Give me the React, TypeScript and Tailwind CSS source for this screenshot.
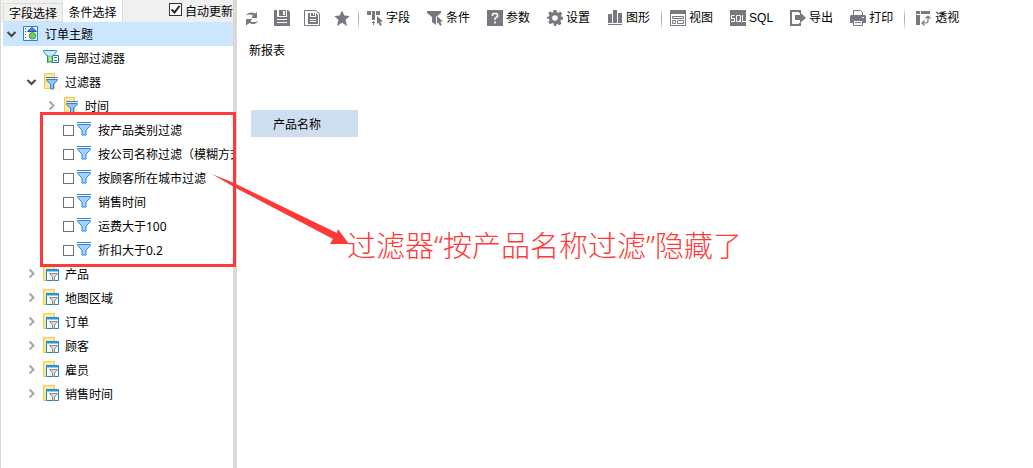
import React from "react";

type IconProps = { children: React.ReactNode };

function ToolIcon({ children }: IconProps) {
  return (
    <svg width="16" height="16" viewBox="0 0 16 16" fill="#767a80" className="shrink-0" aria-hidden="true">
      {children}
    </svg>
  );
}

function TreeIcon({ children }: IconProps) {
  return (
    <svg width="16" height="18" viewBox="0 0 16 18" fill="none" className="shrink-0" aria-hidden="true">
      {children}
    </svg>
  );
}

function Chevron({ open }: { open: boolean }) {
  return (
    <svg width="16" height="16" viewBox="0 0 16 16" fill="none" strokeWidth="2" className="shrink-0" aria-hidden="true">
      {open ? <path d="M2.5 6l4 4 4-4" stroke="#444" /> : <path d="M4.5 3.500l4 4-4 4" stroke="#a6a6a6" />}
    </svg>
  );
}

const topicIcon = (
  <TreeIcon>
    <path d="M.5 1.500h14v14H.5z" fill="#eef5fc" stroke="#1a86d9" />
    <path d="M2 3h1v1H2zM2 6h1v1H2zM2 9h1v1H2zM2 12h1v1H2z" fill="#e8402c" />
    <path d="M9 2.500L13.500 6.500h-9z" fill="#4d7fd6" stroke="#2456b4" />
    <circle cx="9.500" cy="10.800" r="3.200" fill="#7ccb5a" stroke="#3f9b35" />
  </TreeIcon>
);

const localFilterIcon = (
  <TreeIcon>
    <path d="M9.500 6.500h6v7h-6z" fill="#fff" stroke="#2b6bb5" />
    <path d="M11 8.500h3M11 11.500h3" stroke="#2b6bb5" />
    <path d="M.5 1.500h13v1L9.500 7.500h-5L.5 2.500z" fill="#cfeaff" stroke="#2488d8" />
    <path d="M4.500 6.500v7l2.500-1 2.500 1v-7" fill="#7fd08a" stroke="#1f9a3c" />
    <path d="M7 8v4" stroke="#fff" />
  </TreeIcon>
);

const folderFilterIcon = (
  <TreeIcon>
    <path d="M1.500 .5h10v15h-10z" fill="#ffe69a" stroke="#f0c84a" />
    <path d="M3 4.500h12" stroke="#2f86d8" />
    <path d="M3.500 6.500h11v1l-4 3.500v5h-3v-5l-4-3.500z" fill="#8fc4fa" stroke="#2f86d8" />
  </TreeIcon>
);

const funnelIcon = (
  <TreeIcon>
    <path d="M0 1.500h14" stroke="#2f86d8" />
    <path d="M.5 3.500h13v1L9 9v5H5V9L.5 4.500z" fill="#a5d0ff" stroke="#2f86d8" />
  </TreeIcon>
);

const folderTableIcon = (
  <TreeIcon>
    <path d="M.5.500h11v15H.5z" fill="#ffe69a" stroke="#f0c84a" />
    <path d="M3.500 4.500h12v11h-12z" fill="#fff" stroke="#1683d0" />
    <path d="M3 5.500h13" stroke="#1a9ae6" strokeWidth="2" />
    <path d="M6.500 8.500h8l-3 3.500v3.500h-2V12z" fill="#ddd" stroke="#8a8a8a" />
  </TreeIcon>
);

const cursor = <path d="M10 6l6 5.500-2.800.3 1.600 3.200-1.800 1-1.600-3.400L10 14z" />;

const icons = {
  refresh: (
    <ToolIcon>
      <path d="M2 5.500C3.500 2.500 8 1.500 11 3.500L13 2v6H7l2.200-2.200C7.500 4.300 4.500 4.200 2 5.500zM14 11c-1.500 3-5.500 4-8.500 2L2 15.500V9h6.500L6.300 11.200c2 1.300 5 1.200 7.700-.2z" />
    </ToolIcon>
  ),
  save: (
    <ToolIcon>
      <path d="M0 0h3v7h10V0h1l2 2v14H0zM5 0h7v6H5z" />
      <path d="M9 1h2v4H9zM3 9h10v1H3zM3 12h10v1H3z" fill="#fff" />
    </ToolIcon>
  ),
  saveAs: (
    <ToolIcon>
      <path d="M.5.500h11l4 3v12H.5z" fill="none" stroke="#767a80" />
      <path d="M4 3h2v4h6V3l2 2v9H4zM7 3h4v3H7z" />
      <path d="M9 3h1v2H9zM6 9h6v1H6zM6 11h6v1H6z" fill="#fff" />
    </ToolIcon>
  ),
  star: (
    <ToolIcon>
      <path d="M8 .5l2.300 5.100 5.500.5-4.200 3.700L12.900 16 8 12.800 3.100 16l1.300-6.200L.2 6.100l5.500-.5z" />
    </ToolIcon>
  ),
  field: (
    <ToolIcon>
      <path d="M0 1h4v4H0zM5 1h3v9H5zM9 1h4v4H9zM6 11h1v4H6zM5 12h3v1H5z" />
      {cursor}
    </ToolIcon>
  ),
  condition: (
    <ToolIcon>
      <path d="M0 1h14v2L9 7v8l-4-3V7L0 3z" />
      <path d="M10 6l6 5.500-2.800.3 1.600 3.200-1.800 1-1.600-3.400L10 14z" stroke="#fff" strokeWidth="1" paintOrder="stroke" />
    </ToolIcon>
  ),
  param: (
    <ToolIcon>
      <path d="M0 0h16v16H0z" />
      <path d="M5.500 6V4.500l1-1h3l1 1v2L8 8.500V10M8 11.500v2" fill="none" stroke="#fff" strokeWidth="1.600" />
    </ToolIcon>
  ),
  setting: (
    <ToolIcon>
      <path fillRule="evenodd" d="M6.500 0h3l.4 2.300 1.400.6 1.900-1.400 2 2-1.300 2 .6 1.300 1.500.2v2.500l-2.100.5-.6 1.300 1.300 2-2 2-2-1.300-1.200.6L9 16H7l-.5-2.400-1.300-.6-2 1.300-2-2 1.300-2-.5-1.300L0 8.500V7l2-.4.5-1.300-1.300-2 2-2 2 1.400 1-.5zM8 5.200a2.800 2.800 0 100 5.600 2.800 2.800 0 000-5.600z" />
    </ToolIcon>
  ),
  chart: (
    <ToolIcon>
      <path d="M1 4h4v9H1zM6 0h4v13H6zM11 3h4v10h-4zM1 14h14v1H1z" />
    </ToolIcon>
  ),
  view: (
    <ToolIcon>
      <path d="M0 0h16v4H0z" />
      <path d="M.5.500h15v15H.5zM2.500 6.500h11v2h-11zM2.500 10.500h3v3h-3zM7.500 10.500h6v3h-6z" fill="none" stroke="#767a80" />
    </ToolIcon>
  ),
  sql: (
    <ToolIcon>
      <path d="M0 0h16v16H0z" />
      <path d="M4.500 5.500h-3v3h3v3H1M6.500 5.500h4v6h-4zM9 10l2.500 2.500M12.500 5v6.500H16" fill="none" stroke="#fff" />
    </ToolIcon>
  ),
  exporting: (
    <ToolIcon>
      <path d="M0 0h11v3H9V2H2v12h7v-1h2v3H0z" />
      <path d="M5 5h5V2l6 6-6 5v-3H5z" />
    </ToolIcon>
  ),
  print: (
    <ToolIcon>
      <path d="M3.500 5V.5h7l2 2V5M3.500 10.500h9v5h-9z" fill="#fff" stroke="#767a80" />
      <path d="M1 5h14l1 1v7h-3v-3H3v3H0V6z" />
      <path d="M12 7h2v1h-2z" fill="#fff" />
      <path d="M5 12h6v1H5z" />
    </ToolIcon>
  ),
  pivot: (
    <ToolIcon>
      <path d="M0 1h4v3H0zM5 1h9v3H5zM0 5h4v10H0z" />
      <path d="M12 7v4.500L10.500 13H7M9.500 8.500L12 6l2.500 2.500M8.500 10.500L6 13l2.500 2.500" fill="none" stroke="#767a80" strokeWidth="1.200" />
    </ToolIcon>
  ),
};

function IconButton({ label, icon }: { label: string; icon: React.ReactNode }) {
  return (
    <button type="button" aria-label={label} className="flex h-5 items-center">
      {icon}
    </button>
  );
}

function ToolButton({ label, icon }: { label: string; icon: React.ReactNode }) {
  return (
    <button type="button" className="flex h-5 items-center gap-[3px] whitespace-nowrap">
      {icon}
      <span>{label}</span>
    </button>
  );
}

function Divider() {
  return <span className="h-5 w-px shrink-0 bg-gradient-to-b from-white via-gray-400 to-gray-200" />;
}

function Branch({ label, icon, level, open }: { label: string; icon: React.ReactNode; level: 0 | 1 | 2; open?: boolean }) {
  const indent = ["bg-[#cde6ff] pl-0.5", "pl-[22px]", "pl-[42px]"][level];
  return (
    <li className={`flex h-6 items-center gap-0.5 whitespace-nowrap ${indent}`}>
      {open === undefined ? <span className="w-4" /> : <Chevron open={open} />}
      {icon}
      <span className="pt-0.5 pl-1">{label}</span>
    </li>
  );
}

function Leaf({ label }: { label: string }) {
  return (
    <li className="h-6 pl-[60px]">
      <label className="flex h-6 items-center gap-[3px] whitespace-nowrap">
        <input type="checkbox" className="size-[11px] shrink-0 appearance-none border border-[#707070] bg-white" />
        {funnelIcon}
        <span className="pt-0.5 pl-0.5">{label}</span>
      </label>
    </li>
  );
}

const filters = [
  "按产品类别过滤",
  "按公司名称过滤（模糊方式）",
  "按顾客所在城市过滤",
  "销售时间",
  "运费大于100",
  "折扣大于0.2",
];

const tables = ["产品", "地图区域", "订单", "顾客", "雇员", "销售时间"];

export default function App() {
  return (
    <div className="relative flex min-h-screen bg-white font-['Noto_Sans','Noto_Sans_CJK_SC',sans-serif] text-xs text-black">
      <aside className="w-[237px] shrink-0 overflow-hidden border-r-4 border-l border-[#dcd8d3]">
        <div className="flex h-[22px] items-end justify-between bg-[#f0f0f0] pl-0.5">
          <div role="tablist" className="flex h-full items-end">
            <button type="button" role="tab" aria-selected="false" className="h-[19px] w-[60px] border border-[#dcdcdc] pt-0.5 leading-4">
              字段选择
            </button>
            <button type="button" role="tab" aria-selected="true" className="h-[22px] w-[60px] border-r border-[#dcdcdc] bg-white pt-1 leading-[18px]">
              条件选择
            </button>
          </div>
          <label className="flex h-full items-center gap-[3px] whitespace-nowrap">
            <span className="grid pb-1">
              <input type="checkbox" defaultChecked className="peer col-start-1 row-start-1 size-[13px] appearance-none border border-[#333] bg-white" />
              <svg viewBox="0 0 13 13" className="pointer-events-none invisible col-start-1 row-start-1 size-[13px] peer-checked:visible" fill="none" stroke="#222" strokeWidth="2" aria-hidden="true">
                <path d="M2.500 6.500l3 3 5-6.500" />
              </svg>
            </span>
            <span className="pt-0.5">自动更新</span>
          </label>
        </div>
        <ul className="pl-0.5">
          <Branch label="订单主题" icon={topicIcon} level={0} open />
          <Branch label="局部过滤器" icon={localFilterIcon} level={1} />
          <Branch label="过滤器" icon={folderFilterIcon} level={1} open />
          <Branch label="时间" icon={folderFilterIcon} level={2} open={false} />
          {filters.map((name) => (
            <Leaf key={name} label={name} />
          ))}
          {tables.map((name) => (
            <Branch key={name} label={name} icon={folderTableIcon} level={1} open={false} />
          ))}
        </ul>
      </aside>

      <main className="min-w-0 flex-1">
        <div role="toolbar" className="flex h-9 items-center pl-[7px] font-['Liberation_Sans','Noto_Sans_CJK_SC',sans-serif]">
          <div className="flex gap-3.5 pr-2">
            <IconButton label="刷新" icon={icons.refresh} />
            <IconButton label="保存" icon={icons.save} />
            <IconButton label="另存为" icon={icons.saveAs} />
            <IconButton label="收藏" icon={icons.star} />
          </div>
          <Divider />
          <div className="flex gap-[17px] pr-[11px] pl-2">
            <ToolButton label="字段" icon={icons.field} />
            <ToolButton label="条件" icon={icons.condition} />
            <ToolButton label="参数" icon={icons.param} />
            <ToolButton label="设置" icon={icons.setting} />
            <ToolButton label="图形" icon={icons.chart} />
          </div>
          <Divider />
          <div className="flex gap-[17px] pr-[11px] pl-2">
            <ToolButton label="视图" icon={icons.view} />
            <ToolButton label="SQL" icon={icons.sql} />
            <ToolButton label="导出" icon={icons.exporting} />
            <ToolButton label="打印" icon={icons.print} />
          </div>
          <Divider />
          <div className="flex pl-[11px]">
            <ToolButton label="透视" icon={icons.pivot} />
          </div>
        </div>
        <h1 className="px-3 pt-[7px] leading-4">新报表</h1>
        <div className="mt-[51px] ml-3.5 h-[27px] w-[107px] bg-[#cfddf0] pt-px pl-[22px] leading-[27px]">产品名称</div>
      </main>

      <div className="pointer-events-none absolute top-[112px] left-10 h-[155px] w-[196px] border-3 border-[#ff3838]" />
      <svg width="137" height="72" viewBox="0 0 137 72" className="pointer-events-none absolute top-[174px] left-[212px]" fill="#ff3838" aria-hidden="true">
        <path d="M0 0l22 9L125 59l1-4 11 15-19 0 3-5L22 13z" />
      </svg>
      <p className="absolute top-[226px] left-[347px] font-['Noto_Sans','Noto_Sans_CJK_SC',sans-serif] text-[29px] leading-10 font-light whitespace-nowrap text-[#ff3838]">
        过滤器“按产品名称过滤”隐藏了
      </p>
    </div>
  );
}
